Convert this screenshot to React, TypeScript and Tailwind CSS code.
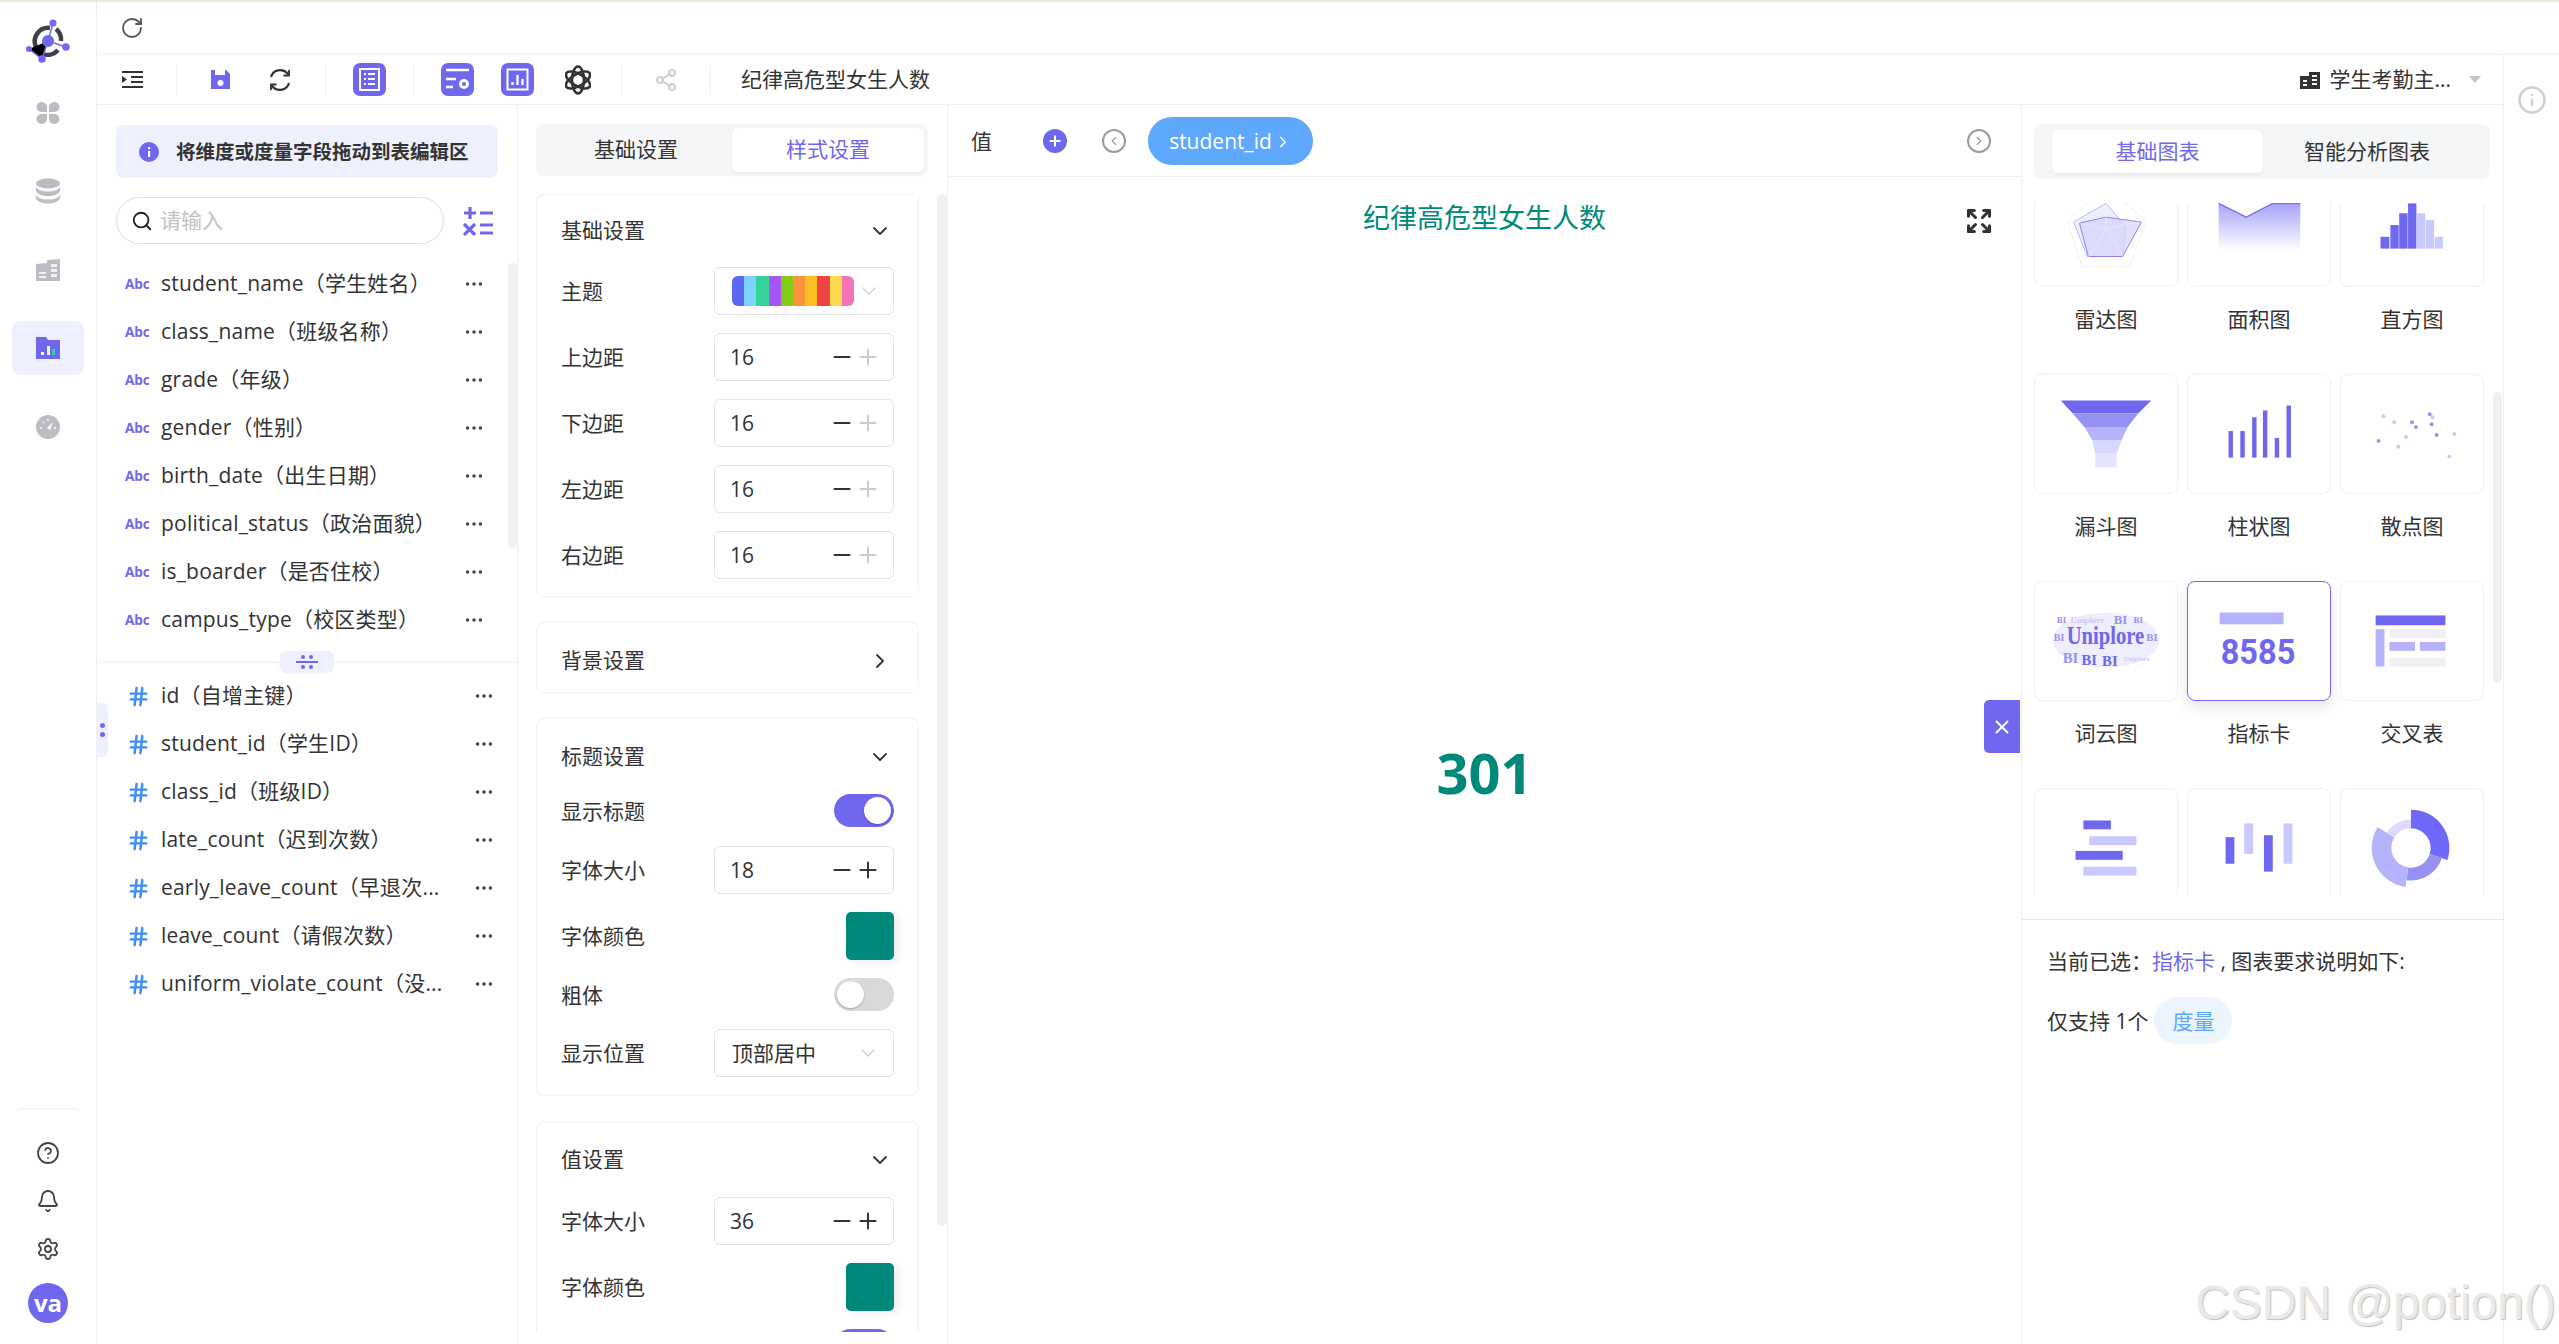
import type { ReactNode } from "react";
import {
    Bell,
    ChevronDown,
    ChevronLeft,
    ChevronRight,
    CircleHelp,
    Ellipsis,
    Expand,
    Hash,
    Info,
    Minus,
    Plus,
    RotateCw,
    Search,
    Settings,
    Share2,
    X,
} from "lucide-react";

const DARK = "#6f68ee";
const MID = "#9592f4";
const SOFT = "#b5b3fb";
const PALE = "#c9c9fd";

const textFields = [
    "student_name（学生姓名）",
    "class_name（班级名称）",
    "grade（年级）",
    "gender（性别）",
    "birth_date（出生日期）",
    "political_status（政治面貌）",
    "is_boarder（是否住校）",
    "campus_type（校区类型）",
];

const numberFields = [
    "id（自增主键）",
    "student_id（学生ID）",
    "class_id（班级ID）",
    "late_count（迟到次数）",
    "early_leave_count（早退次...",
    "leave_count（请假次数）",
    "uniform_violate_count（没...",
];

const themeColors = [
    "bg-[#5b67f1]",
    "bg-[#7dd3fc]",
    "bg-[#34d399]",
    "bg-[#a855f7]",
    "bg-[#84cc16]",
    "bg-[#fb923c]",
    "bg-[#fbbf24]",
    "bg-[#ef4444]",
    "bg-[#fcd94d]",
    "bg-[#f472b6]",
];

function Logo() {
    return (
        <svg width="64" height="52" viewBox="0 0 64 52">
            <g fill="none" stroke="#3f4048" strokeWidth="4.5">
                <path d="M20 31 A13.5 13.5 0 0 1 34 12" />
                <path d="M40 13 A13.5 13.5 0 0 1 45 25" />
                <path d="M27 38 A13.5 13.5 0 0 0 42 34" />
            </g>
            <g stroke={DARK} strokeWidth="1.5">
                <path d="M32 25 L37 7 M32 25 L50 31 M32 25 L26 43 L13 33" />
            </g>
            <g fill={DARK}>
                <circle cx="32" cy="25" r="6" />
                <circle cx="37" cy="7" r="3.5" />
                <circle cx="50" cy="31" r="3.8" />
                <circle cx="26" cy="43" r="3.8" />
                <circle cx="13" cy="33" r="3" />
            </g>
        </svg>
    );
}

function RailIcon({ kind }: { kind: string }) {
    const c = "#bcbcc4";
    if (kind === "apps") {
        return (
            <svg width="24" height="24" viewBox="0 0 24 24" fill={c}>
                <path d="M11 11H5.5a5 5 0 0 1 0-10C9 1 11 3.5 11 6z" />
                <path d="M13 11h5.500a5 5 0 0 0 0-10C15 1 13 3.500 13 6z" />
                <path d="M11 13H5.500a5 5 0 0 0 0 10C9 23 11 20.500 11 18z" />
                <path d="M13 13h5.500a5 5 0 0 1 0 10C15 23 13 20.500 13 18z" />
            </svg>
        );
    }
    if (kind === "db") {
        return (
            <svg width="24" height="26" viewBox="0 0 24 26" fill={c}>
                <ellipse cx="12" cy="5.500" rx="12" ry="5" />
                <path d="M0 9c2 3 6 4.500 12 4.500S22 12 24 9v4c-1 3-6 5-12 5S1 16 0 13z" />
                <path d="M0 17c2 3 6 4.500 12 4.500S22 20 24 17v3.500c-1 3-6 5-12 5s-11-2-12-5z" />
            </svg>
        );
    }
    if (kind === "table") {
        return (
            <svg width="24" height="24" viewBox="0 0 24 24">
                <path d="M0 6l11-1V2l13-1v22H0z" fill={c} />
                <path d="M3 14h7v2H3zM3 18h7v2H3zM15 6h6v3h-6zM15 11h6v3h-6zM15 16h6v3h-6z" fill="#fff" opacity=".8" />
            </svg>
        );
    }
    if (kind === "folder") {
        return (
            <svg width="24" height="24" viewBox="0 0 24 24">
                <path d="M0 1h10l2 3h12v19H0z" fill={DARK} />
                <path d="M5 16h3v3H5z" fill="#fff" />
                <path d="M11 10h3v9h-3z" fill="#ffffff" opacity=".9" />
                <path d="M16 13h3v6h-3z" fill="#3fc8c0" />
            </svg>
        );
    }
    return (
        <svg width="24" height="24" viewBox="0 0 24 24">
            <circle cx="12" cy="12" r="12" fill={c} />
            <path d="M11 13l6-6-3 8z" fill="#fff" />
            <path d="M4 13h2M7 7l1 1M12 4v2M20 13h-2" stroke="#fff" strokeWidth="1.500" />
        </svg>
    );
}

function PurpleIcon({ children }: { children: ReactNode }) {
    return (
        <div className="h-[33px] w-[33px] shrink-0 rounded-[7px] bg-[#6f68ee]">
            <svg width="33" height="33" viewBox="0 0 33 33" fill="none" stroke="#fff" strokeWidth="2">
                {children}
            </svg>
        </div>
    );
}

function ToolDivider({ className }: { className: string }) {
    return <div className={`h-[30px] w-px shrink-0 bg-[#efeff2] ${className}`} />;
}

function Toolbar() {
    return (
        <div className="flex h-[50px] shrink-0 items-center border-b border-[#efefef]">
            <svg className="ml-[25px] shrink-0" width="21" height="21" viewBox="0 0 21 21" fill="#333">
                <path d="M0 2h21v2H0zM9 7h12v2H9zM9 12h12v2H9zM0 17h21v2H0zM0 7l5 3.500L0 14z" />
            </svg>
            <ToolDivider className="ml-[33px]" />
            <svg className="ml-[33px] shrink-0" width="21" height="21" viewBox="0 0 21 21">
                <path d="M1 1h15l4 4v15H1z" fill={DARK} />
                <path d="M5 1h10v5H5z" fill="#fff" />
                <circle cx="10.500" cy="14" r="3" fill="#fff" />
            </svg>
            <svg className="ml-[37px] shrink-0" width="24" height="24" viewBox="0 0 24 24" fill="none" stroke="#333" strokeWidth="2.200">
                <path d="M3 9a9.500 9.500 0 0 1 16-4l2 2" />
                <path d="M21 15a9.500 9.500 0 0 1-16 4l-2-2" />
                <path d="M21 2v5.500h-5.500M3 22v-5.500h5.500" strokeWidth="1.800" />
            </svg>
            <ToolDivider className="ml-[33px]" />
            <div className="ml-[27px]">
                <PurpleIcon>
                    <rect x="7" y="6" width="19" height="21" />
                    <path d="M11 11h2M15 11h7M11 16h2M15 16h7M11 21h2M15 21h7" />
                </PurpleIcon>
            </div>
            <ToolDivider className="ml-[27px]" />
            <div className="ml-[27px]">
                <PurpleIcon>
                    <path d="M5 7h23M5 16h10M5 24h7" strokeWidth="2.400" />
                    <circle cx="23" cy="21" r="3.500" strokeWidth="3" />
                </PurpleIcon>
            </div>
            <div className="ml-[27px]">
                <PurpleIcon>
                    <rect x="6.500" y="6.500" width="20" height="20" />
                    <path d="M11.500 22v-3M16.500 22v-10M21.500 22v-6" strokeWidth="2.400" />
                </PurpleIcon>
            </div>
            <svg className="ml-[31px] shrink-0" width="26" height="30" viewBox="0 0 26 30" fill="none" stroke="#333" strokeWidth="2.600">
                <ellipse cx="13" cy="15" rx="6" ry="13.500" />
                <ellipse cx="13" cy="15" rx="6" ry="13.500" transform="rotate(60 13 15)" />
                <ellipse cx="13" cy="15" rx="6" ry="13.500" transform="rotate(-60 13 15)" />
            </svg>
            <ToolDivider className="ml-[30px]" />
            <Share2 className="ml-[32px] shrink-0" size={24} color="#cfcfcf" strokeWidth={2} />
            <ToolDivider className="ml-[32px]" />
            <span className="ml-[30px] text-[21px] text-[#333]">纪律高危型女生人数</span>
            <div className="ml-auto flex items-center pr-[22px]">
                <svg width="20" height="18" viewBox="0 0 20 18" fill="#333">
                    <path d="M0 5h9V1h11v17H0zM3 9v2h4V9zM3 13v2h4v-2zM12 4v2h5V4zM12 8v2h5V8zM12 12v2h5v-2z" fillRule="evenodd" />
                </svg>
                <span className="ml-[9px] text-[21px] text-[#333]">学生考勤主...</span>
                <div className="ml-[18px] h-0 w-0 border-x-[6px] border-t-[7px] border-x-transparent border-t-[#c4c4c4]" />
            </div>
        </div>
    );
}

function FieldRow({ name, kind }: { name: string; kind: "text" | "number" }) {
    return (
        <div className={`flex h-[48px] items-center pt-[2px] ${kind === "text" ? "pr-[32px] pl-[28px]" : "pr-[22px] pl-[30px]"}`}>
            {kind === "text" ? (
                <span className="w-[36px] shrink-0 text-[13.500px] font-bold text-[#6f68ee]">Abc</span>
            ) : (
                <Hash className="mr-[11px] shrink-0" size={23} strokeWidth={2.600} color="#3d8ff5" />
            )}
            <span className="min-w-0 flex-1 truncate text-[21px] tracking-[0.2px] text-[#333]">{name}</span>
            <Ellipsis className="shrink-0" size={22} strokeWidth={1.800} color="#444" />
        </div>
    );
}

function FieldPanel() {
    return (
        <div className="relative w-[421px] shrink-0 border-r border-[#efefef] pt-[20px]">
            <div className="mr-[19px] ml-[19px] flex h-[53px] items-center rounded-[8px] bg-[#eef0fe] pl-[23px]">
                <svg className="shrink-0" width="20" height="20" viewBox="0 0 20 20">
                    <circle cx="10" cy="10" r="10" fill={DARK} />
                    <path d="M9 9h2.200v6H9zM9 5h2.200v2.200H9z" fill="#fff" />
                </svg>
                <span className="ml-[17px] text-[19.500px] font-bold whitespace-nowrap text-[#333]">将维度或度量字段拖动到表编辑区</span>
            </div>
            <div className="mt-[19px] ml-[19px] flex items-center">
                <div className="flex h-[47px] w-[328px] items-center rounded-full border border-[#dfdfdf] pl-[14px]">
                    <Search size={22} strokeWidth={2} color="#222" />
                    <input placeholder="请输入" className="ml-[7px] w-[200px] bg-transparent text-[21px] outline-none placeholder:text-[#c2c2c2]" />
                </div>
                <svg className="ml-[19px]" width="30" height="30" viewBox="0 0 30 30" stroke={DARK} strokeWidth="3.200" fill="none">
                    <path d="M7 1v12M1 7h12M17 7h13M1 18l11 11M12 18L1 29M17 19h13M17 27h13" />
                </svg>
            </div>
            <div className="mt-[15px]">
                {textFields.map((f) => (
                    <FieldRow key={f} name={f} kind="text" />
                ))}
            </div>
            <div className="mt-[19px] border-t border-[#efefef] pt-[8px]">
                {numberFields.map((f) => (
                    <FieldRow key={f} name={f} kind="number" />
                ))}
            </div>
            <div className="absolute top-[158px] right-0 h-[285px] w-[9px] rounded-full bg-[#f0f0f3]" />
            <div className="absolute top-[546px] left-[183px] flex h-[22px] w-[54px] items-center justify-center rounded-[6px] bg-[#eef0fe]">
                <svg width="22" height="14" viewBox="0 0 22 14" fill={DARK}>
                    <circle cx="7" cy="2" r="2" />
                    <circle cx="15" cy="2" r="2" />
                    <rect x="0" y="6" width="22" height="2" />
                    <circle cx="7" cy="12" r="2" />
                    <circle cx="15" cy="12" r="2" />
                </svg>
            </div>
            <div className="absolute top-[598px] left-0 flex h-[54px] w-[11px] flex-col items-center justify-center gap-[4px] rounded-r-[5px] bg-[#eef0fe]">
                <div className="h-[5px] w-[5px] rounded-full bg-[#6f68ee]" />
                <div className="h-[5px] w-[5px] rounded-full bg-[#6f68ee]" />
            </div>
        </div>
    );
}

function Card({ title, head, pad, children }: { title: string; head: string; pad: string; children: ReactNode }) {
    return (
        <div className={`mb-[25px] w-[383px] rounded-[8px] border border-[#f0f0f0] px-[24px] ${pad}`}>
            <div className={`flex items-center justify-between ${head}`}>
                <span className="text-[21px] text-[#333]">{title}</span>
                <ChevronDown className="mr-[2px]" size={24} strokeWidth={1.800} color="#333" />
            </div>
            <div className="flex flex-col gap-[18px]">{children}</div>
        </div>
    );
}

function Row({ label, children }: { label?: string; children: ReactNode }) {
    return (
        <div className="flex items-center justify-between">
            <span className="pt-[2px] text-[21px] text-[#333]">{label}</span>
            {children}
        </div>
    );
}

function NumberBox({ value, plusOff = false }: { value: number; plusOff?: boolean }) {
    return (
        <div className="flex h-[48px] w-[180px] items-center rounded-[6px] border border-[#e3e3e3] pr-[12px] pl-[15px]">
            <span className="flex-1 pt-[2px] text-[21px] text-[#333]">{value}</span>
            <Minus size={26} strokeWidth={1.800} color="#333" />
            <Plus size={26} strokeWidth={1.800} color={plusOff ? "#cccccc" : "#333"} />
        </div>
    );
}

function Toggle({ on }: { on: boolean }) {
    return (
        <div className={`flex h-[33px] w-[60px] items-center rounded-full px-[3px] ${on ? "justify-end bg-[#6f68ee]" : "justify-start bg-[#d9d9d9]"}`}>
            <div className="h-[27px] w-[27px] rounded-full bg-white shadow-[0_1px_2px_rgba(0,0,0,0.25)]" />
        </div>
    );
}

function Swatch() {
    return <div className="h-[48px] w-[48px] rounded-[5px] bg-[#00897b] shadow-[4px_2px_8px_rgba(0,0,0,0.08)]" />;
}

function SettingsPanel() {
    return (
        <div className="relative flex w-[430px] shrink-0 flex-col border-r border-[#efefef] pt-[19px] pl-[18px]">
            <div className="flex h-[52px] w-[392px] shrink-0 items-center rounded-[8px] bg-[#f5f6f8] px-[4px]">
                <span className="flex-1 text-center text-[21px] text-[#333]">基础设置</span>
                <span className="flex h-[44px] w-[192px] items-center justify-center rounded-[6px] bg-white text-[21px] text-[#6f68ee] shadow-[0_2px_4px_rgba(0,0,0,0.06)]">样式设置</span>
            </div>
            <div className="mt-[18px] h-[1138px] shrink-0 overflow-hidden">
                <Card title="基础设置" head="h-[72px]" pad="pb-[17px]">
                    <Row label="主题">
                        <div className="flex h-[48px] w-[180px] items-center rounded-[6px] border border-[#e3e3e3] pl-[17px]">
                            <div className="flex h-[30px] w-[122px] overflow-hidden rounded-[6px]">
                                {themeColors.map((c) => (
                                    <div key={c} className={`flex-1 ${c}`} />
                                ))}
                            </div>
                            <ChevronDown className="ml-[3px]" size={24} strokeWidth={1.300} color="#cfcfcf" />
                        </div>
                    </Row>
                    {["上边距", "下边距", "左边距", "右边距"].map((l) => (
                        <Row key={l} label={l}>
                            <NumberBox value={16} plusOff />
                        </Row>
                    ))}
                </Card>
                <div className="mb-[25px] flex h-[71px] w-[383px] items-center justify-between rounded-[8px] border border-[#f0f0f0] pt-[7px] pr-[26px] pl-[24px]">
                    <span className="text-[21px] text-[#333]">背景设置</span>
                    <ChevronRight size={24} strokeWidth={1.800} color="#333" />
                </div>
                <Card title="标题设置" head="h-[75px]" pad="pb-[18px]">
                    <Row label="显示标题">
                        <Toggle on />
                    </Row>
                    <Row label="字体大小">
                        <NumberBox value={18} />
                    </Row>
                    <Row label="字体颜色">
                        <Swatch />
                    </Row>
                    <Row label="粗体">
                        <Toggle on={false} />
                    </Row>
                    <Row label="显示位置">
                        <div className="flex h-[48px] w-[180px] items-center rounded-[6px] border border-[#e3e3e3] pl-[17px]">
                            <span className="flex-1 pt-[2px] text-[21px] text-[#333]">顶部居中</span>
                            <ChevronDown className="mr-[13px]" size={24} strokeWidth={1.300} color="#cfcfcf" />
                        </div>
                    </Row>
                </Card>
                <Card title="值设置" head="h-[75px]" pad="pb-[18px]">
                    <Row label="字体大小">
                        <NumberBox value={36} />
                    </Row>
                    <Row label="字体颜色">
                        <Swatch />
                    </Row>
                    <Row>
                        <Toggle on />
                    </Row>
                </Card>
            </div>
            <div className="absolute top-[89px] right-0 h-[1032px] w-[10px] rounded-full bg-[#f0f0f3]" />
        </div>
    );
}

function CenterPanel() {
    return (
        <div className="relative flex w-[1074px] shrink-0 flex-col border-r border-[#efefef]">
            <div className="flex h-[72px] shrink-0 items-center border-b border-[#efefef] pr-[30px] pl-[23px]">
                <span className="pt-[2px] text-[21px] text-[#333]">值</span>
                <div className="ml-[51px] flex h-[24px] w-[24px] items-center justify-center rounded-full bg-[#6f68ee]">
                    <Plus size={16} strokeWidth={3} color="#fff" />
                </div>
                <div className="ml-[35px] flex h-[24px] w-[24px] items-center justify-center rounded-full border-2 border-[#9a9aa3]">
                    <ChevronLeft size={14} strokeWidth={2} color="#9a9aa3" />
                </div>
                <div className="ml-[22px] flex h-[48px] w-[165px] items-center justify-center gap-[2px] rounded-full bg-[#5ea8fe] pt-[2px] text-[21px] text-white">
                    student_id
                    <ChevronRight size={18} strokeWidth={2} color="#fff" />
                </div>
                <div className="ml-auto flex h-[24px] w-[24px] items-center justify-center rounded-full border-2 border-[#9a9aa3]">
                    <ChevronRight size={14} strokeWidth={2} color="#9a9aa3" />
                </div>
            </div>
            <div className="flex flex-1 flex-col items-center pt-[21px]">
                <div className="text-[27px] leading-[40px] text-[#00897b]">纪律高危型女生人数</div>
                <div className="mb-[38px] flex flex-1 items-center text-[56px] font-bold text-[#00897b]">301</div>
            </div>
            <Expand className="absolute top-[102px] right-[28px]" size={28} strokeWidth={2.600} color="#333" />
            <div className="absolute top-[595px] right-[1px] flex h-[53px] w-[36px] items-center justify-center rounded-l-[5px] bg-[#6f68ee]">
                <X size={22} strokeWidth={2.200} color="#fff" />
            </div>
        </div>
    );
}

function arc(r0: number, r1: number, a0: number, a1: number, cx = 71, cy = 60) {
    const pt = (r: number, a: number) => {
        const t = (a * Math.PI) / 180;
        return `${(cx + r * Math.sin(t)).toFixed(1)} ${(cy - r * Math.cos(t)).toFixed(1)}`;
    };
    const large = a1 - a0 > 180 ? 1 : 0;
    return `M${pt(r1, a0)} A${r1} ${r1} 0 ${large} 1 ${pt(r1, a1)} L${pt(r0, a1)} A${r0} ${r0} 0 ${large} 0 ${pt(r0, a0)} Z`;
}

function Bars({ items }: { items: [number, number, number, number, string][] }) {
    return (
        <>
            {items.map(([x, y, w, h, fill], i) => (
                <rect key={i} x={x} y={y} width={w} height={h} fill={fill} />
            ))}
        </>
    );
}

const serif = "'Liberation Serif', serif";

const charts: { label: string; active?: boolean; art: ReactNode }[] = [
    {
        label: "雷达图",
        art: (
            <>
                <path d="M72 22L113 53 96 100H48L32 53Z" fill="none" stroke="#f0f0f6" />
                <path d="M72 36L92 59 89 90H53L39 55Z" fill="#eeeefd" stroke="#b8b6fa" />
                <path d="M45 56L72 50 108 55 89 90 54 90Z" fill="#d5d3fb" fillOpacity=".7" stroke="#8983f2" />
                <path d="M72 22V62M32 53L72 62 113 53M48 100L72 62 96 100" fill="none" stroke="#ffffff" strokeOpacity=".35" />
            </>
        ),
    },
    {
        label: "面积图",
        art: (
            <>
                <defs>
                    <linearGradient id="areaFill" x1="0" y1="0" x2="0" y2="1">
                        <stop offset="0" stopColor="#a8a3f8" />
                        <stop offset="1" stopColor="#ffffff" />
                    </linearGradient>
                </defs>
                <path d="M31 36L59 50 86 36H114V84H31Z" fill="url(#areaFill)" />
                <path d="M31 36L59 50 86 36H114" fill="none" stroke="#7b72f0" strokeWidth="1.500" />
            </>
        ),
    },
    {
        label: "直方图",
        art: (
            <Bars
                items={[
                    [40, 70, 9, 12, DARK],
                    [50, 58, 8.500, 24, DARK],
                    [59, 46, 8.500, 36, DARK],
                    [68, 36, 8.500, 46, DARK],
                    [77, 46, 8.500, 36, PALE],
                    [86, 53, 8.500, 29, PALE],
                    [95, 70, 8.500, 12, PALE],
                ]}
            />
        ),
    },
    {
        label: "漏斗图",
        art: (
            <>
                <path d="M26 26H118L105 39H38Z" fill={DARK} />
                <path d="M38 39H105L94 53H50Z" fill={MID} />
                <path d="M50 53H94L88 66H58Z" fill={SOFT} />
                <path d="M58 66H88L83 80H61Z" fill="#d8d7fe" />
                <path d="M61 80H83V94H61Z" fill="#e6e5ff" />
            </>
        ),
    },
    {
        label: "柱状图",
        art: (
            <Bars
                items={[
                    [41, 57, 4.500, 27, DARK],
                    [53, 57, 4.500, 27, DARK],
                    [65, 43, 4.500, 41, DARK],
                    [76, 36, 4.500, 48, DARK],
                    [88, 64, 4.500, 20, DARK],
                    [100, 31, 4.500, 53, DARK],
                ]}
            />
        ),
    },
    {
        label: "散点图",
        art: (
            <>
                {[
                    [43, 42, PALE],
                    [54, 48, PALE],
                    [72, 48, MID],
                    [76, 53, MID],
                    [90, 40, MID],
                    [93, 43, PALE],
                    [92, 50, MID],
                    [97, 61, MID],
                    [115, 60, PALE],
                    [66, 63, PALE],
                    [38, 67, MID],
                    [58, 73, PALE],
                    [110, 83, PALE],
                ].map(([x, y, c], i) => (
                    <circle key={i} cx={x} cy={y} r="2" fill={c as string} />
                ))}
            </>
        ),
    },
    {
        label: "词云图",
        art: (
            <g fontFamily={serif} fontWeight="700">
                <ellipse cx="72" cy="59" rx="54" ry="28" fill="#eeeefd" />
                <g fill={PALE}>
                    <text x="36" y="42" fontSize="9">Uniplore</text>
                    <text x="90" y="80" fontSize="7">Uniplore</text>
                </g>
                <g fill={MID}>
                    <text x="22" y="42" fontSize="9">BI</text>
                    <text x="80" y="43" fontSize="13">BI</text>
                    <text x="100" y="42" fontSize="9">BI</text>
                    <text x="19" y="60" fontSize="10">BI</text>
                    <text x="113" y="60" fontSize="11">BI</text>
                    <text x="28" y="82" fontSize="15">BI</text>
                </g>
                <g fill={DARK}>
                    <text transform="translate(32 63) scale(1 1.250)" fontSize="21">Uniplore</text>
                    <text x="47" y="84" fontSize="15">BI</text>
                    <text x="68" y="85" fontSize="15">BI</text>
                </g>
            </g>
        ),
    },
    {
        label: "指标卡",
        active: true,
        art: (
            <>
                <rect x="32" y="31" width="65" height="12" fill={SOFT} />
                <text x="33" y="83" fontFamily="Roboto, sans-serif" fontWeight="700" fontSize="36" textLength="76" lengthAdjust="spacingAndGlyphs" fill={DARK}>8585</text>
            </>
        ),
    },
    {
        label: "交叉表",
        art: (
            <Bars
                items={[
                    [35, 34, 71, 10, DARK],
                    [35, 48, 9, 38, SOFT],
                    [49, 48, 57, 9, "#f0f0f3"],
                    [49, 61, 26, 9, SOFT],
                    [80, 61, 26, 9, SOFT],
                    [49, 77, 57, 9, "#f0f0f3"],
                ]}
            />
        ),
    },
    {
        label: "条形图",
        art: (
            <Bars
                items={[
                    [49, 32, 28, 9, DARK],
                    [55, 48, 48, 9, PALE],
                    [41, 63, 48, 9, DARK],
                    [49, 79, 54, 9, PALE],
                ]}
            />
        ),
    },
    {
        label: "波动图",
        art: (
            <Bars
                items={[
                    [38, 49, 9, 27, DARK],
                    [57, 35, 9, 31, PALE],
                    [77, 47, 9, 37, DARK],
                    [97, 35, 9, 41, PALE],
                ]}
            />
        ),
    },
    {
        label: "环形图",
        art: (
            <>
                <path d={arc(20, 39, 0, 108)} fill="#6e68fb" />
                <path d={arc(20, 33, 108, 188)} fill={MID} />
                <path d={arc(20, 40, 188, 302)} fill={SOFT} />
                <path d={arc(20, 29, 302, 360)} fill="#dcdbfe" />
            </>
        ),
    },
];

function ChartPanel() {
    return (
        <div className="relative flex min-w-0 flex-1 flex-col">
            <div className="mt-[19px] ml-[12px] flex h-[55px] w-[456px] shrink-0 items-center rounded-[8px] bg-[#f5f6f8] pl-[18px]">
                <span className="flex h-[43px] w-[211px] items-center justify-center rounded-[6px] bg-white text-[21px] text-[#6f68ee] shadow-[0_2px_4px_rgba(0,0,0,0.06)]">基础图表</span>
                <span className="ml-[41px] text-[21px] text-[#333]">智能分析图表</span>
            </div>
            <div className="mt-[24px] h-[692px] shrink-0 overflow-hidden pl-[12px]">
                <div className="-mt-[36px] grid w-[450px] grid-cols-3 gap-x-[9px] gap-y-[25px]">
                    {charts.slice(0, 9).map((c) => (
                        <div key={c.label}>
                            <div className={`h-[120px] w-[144px] rounded-[8px] border ${c.active ? "border-[#6f68ee] shadow-[0_6px_14px_rgba(0,0,0,0.1)]" : "border-[#f0f0f0]"}`}>
                                <svg width="142" height="118" viewBox="0 0 144 120">
                                    {c.art}
                                </svg>
                            </div>
                            <div className="flex h-[62px] items-center justify-center pt-[3px] text-[21px] text-[#333]">{c.label}</div>
                        </div>
                    ))}
                    {charts.slice(9).map((c) => (
                        <div key={c.label} className="h-[120px] w-[144px] rounded-[8px] border border-[#f0f0f0]">
                            <svg width="142" height="118" viewBox="0 0 144 120">
                                {c.art}
                            </svg>
                        </div>
                    ))}
                </div>
            </div>
            <div className="mt-[24px] border-t border-[#e8e8e8] pt-[21px] pl-[25px] text-[21px] text-[#333]">
                <div className="leading-[40px]">
                    当前已选：<span className="text-[#6f68ee]">指标卡</span> , 图表要求说明如下:
                </div>
                <div className="mt-[16px] flex items-center">
                    <span className="pt-[2px]">仅支持 1个</span>
                    <span className="ml-[6px] flex h-[47px] w-[78px] items-center justify-center rounded-full bg-[#ecf4fe] pt-[2px] text-[#5ea8fe]">度量</span>
                </div>
            </div>
            <div className="absolute top-[287px] right-[1px] h-[291px] w-[9px] rounded-full bg-[#f0f0f3]" />
        </div>
    );
}

export default function App() {
    return (
        <div className="relative flex h-screen w-screen flex-col overflow-hidden bg-white font-['Open_Sans','Noto_Sans_CJK_SC',sans-serif] text-[#333]">
            <div className="h-[2px] shrink-0 bg-[#e9ecdd]" />
            <div className="flex min-h-0 flex-1">
                <div className="flex w-[97px] shrink-0 flex-col items-center border-r border-[#efefef] pt-[14px]">
                    <Logo />
                    <div className="mt-[18px] flex flex-col gap-[24.400px]">
                        {["apps", "db", "table", "folder", "gauge"].map((k) => (
                            <div key={k} className={`flex h-[54px] w-[72px] items-center justify-center rounded-[8px] ${k === "folder" ? "bg-[#eef0fe]" : ""}`}>
                                <RailIcon kind={k} />
                            </div>
                        ))}
                    </div>
                    <div className="mt-auto flex w-[60px] flex-col items-center border-t border-[#efefef] pt-[31px] pb-[21px]">
                        <div className="flex flex-col gap-[24px] pt-[1px]">
                            <CircleHelp size={24} strokeWidth={1.800} color="#444" />
                            <Bell size={24} strokeWidth={1.800} color="#444" />
                            <Settings size={24} strokeWidth={1.800} color="#444" />
                        </div>
                        <div className="mt-[22px] flex h-[40px] w-[40px] items-center justify-center rounded-full bg-[#6f68ee] text-[24px] font-bold text-white">va</div>
                    </div>
                </div>
                <div className="flex min-w-0 flex-1 flex-col">
                    <div className="flex h-[53px] shrink-0 items-center border-b border-[#efefef] pl-[23px]">
                        <RotateCw size={24} strokeWidth={1.800} color="#555" />
                    </div>
                    <div className="flex min-h-0 flex-1">
                        <div className="flex w-[2406px] shrink-0 flex-col">
                            <Toolbar />
                            <div className="flex min-h-0 flex-1">
                                <FieldPanel />
                                <SettingsPanel />
                                <CenterPanel />
                                <ChartPanel />
                            </div>
                        </div>
                        <div className="flex flex-1 justify-center border-l border-[#efefef] pt-[30px]">
                            <Info size={30} strokeWidth={2} color="#cfcfcf" />
                        </div>
                    </div>
                </div>
            </div>
            <div className="pointer-events-none absolute right-[3px] bottom-[5px] font-['Liberation_Sans',sans-serif] text-[48px] whitespace-nowrap text-[#e9e9e9] [text-shadow:1px_1px_1px_#bdbdbd]">
                CSDN @potion()
            </div>
        </div>
    );
}
